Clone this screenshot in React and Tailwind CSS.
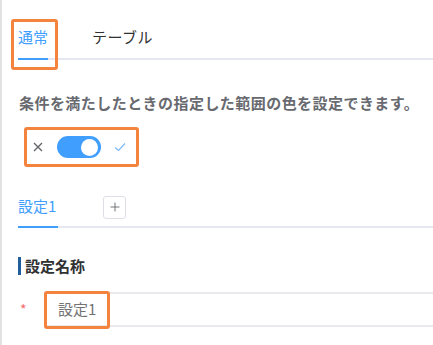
import { Plus } from 'lucide-react'

const Mark = ({ className }) => (
  <div className={`pointer-events-none absolute rounded-[3px] border-[3px] border-[#f4833d] ${className}`} />
)

const App = () => {
  return (
    <div className="relative h-[345px] w-[433px] overflow-hidden border-l-2 border-[#e2e2e2] bg-white pl-4 font-['Noto_Sans_CJK_JP','Noto_Sans',sans-serif] text-[15px] text-[#606266]">
      {/* main tabs */}
      <div className="mt-5 flex h-10 items-stretch gap-[44px] border-b-2 border-[#e4e7ed]">
        <div className="-mb-[2px] flex items-center border-b-2 border-[#409eff] pb-[3px] text-[#409eff]">通常</div>
        <div className="flex items-center pb-[3px] tracking-[0.5px] text-[#303133]">テーブル</div>
      </div>

      <p className="mt-[32px] pl-[1px] font-semibold leading-[22px] tracking-[0.45px] text-[#686a70]">条件を満たしたときの指定した範囲の色を設定できます。</p>

      {/* switch */}
      <div className="mt-[22px] flex h-[22px] items-center">
        <svg className="ml-[15px] h-[10px] w-[10px]" viewBox="0 0 10 10" fill="none" stroke="#606266" strokeWidth="1.3">
          <path d="M1 1l8 8M9 1l-8 8" />
        </svg>
        <div className="ml-[14px] flex h-[22px] w-[44px] items-center justify-end rounded-full bg-[#409eff] pr-[3px]">
          <div className="h-[17px] w-[17px] rounded-full bg-white" />
        </div>
        <svg className="ml-[13px] h-[10px] w-[12px]" viewBox="0 0 12 10" fill="none" stroke="#7db8f7" strokeWidth="1.2">
          <path d="M1 5.5l3.5 3L11 1.5" />
        </svg>
      </div>

      {/* setting tabs */}
      <div className="mt-[30px] flex h-10 items-stretch gap-[45px] border-b-2 border-[#e4e7ed]">
        <div className="-mb-[2px] flex items-center border-b-2 border-[#409eff] pr-[2px] pb-[2px] text-[#409eff]">設定1</div>
        <div className="flex items-center">
          <button
            type="button"
            className="flex h-[23px] w-[23px] items-center justify-center rounded-[3px] border border-[#dcdfe6] text-[#606266]"
          >
            <Plus className="h-[14px] w-[14px]" strokeWidth={1.5} />
          </button>
        </div>
      </div>

      {/* title */}
      <div className="mt-[29px] flex h-[18px] items-center">
        <div className="h-[18px] w-[3px] bg-[#1f5f9e]" />
        <span className="ml-[4px] font-bold text-[#303133]">設定名称</span>
      </div>

      {/* input */}
      <div className="mt-[17px] flex items-center">
        <span className="w-[26px] shrink-0 pl-[2px] text-[14px] text-[#f56c6c]">*</span>
        <div className="flex h-[35px] w-[440px] shrink-0 items-center border-2 border-[#e9e9ee] pl-[12px] text-[15px] text-[#737373]">設定1</div>
      </div>

      <Mark className="left-[9px] top-[19px] h-[51px] w-[47px]" />
      <Mark className="left-[22px] top-[127px] h-[40px] w-[115px]" />
      <Mark className="left-[42px] top-[291px] h-[38px] w-[66px]" />
    </div>
  )
}

export default App
